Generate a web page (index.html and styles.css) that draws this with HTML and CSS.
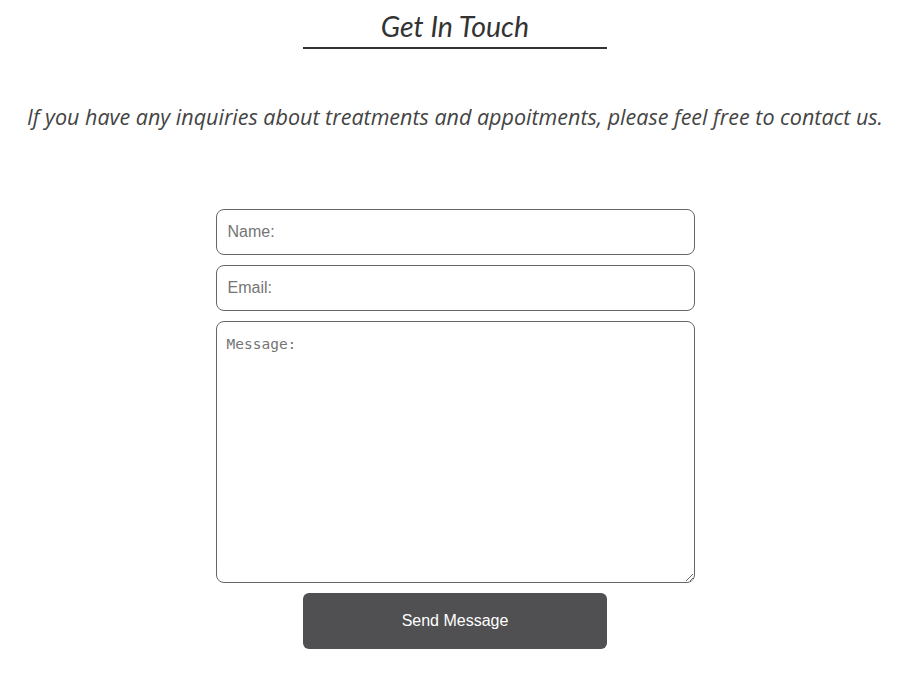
FILE: index.html
```html
<!DOCTYPE html>
<html lang="en">
<head>
<meta charset="utf-8">
<title>Get In Touch</title>
<link rel="stylesheet" href="styles.css">
</head>
<body>
<section class="contact">
  <h1 class="title">Get In Touch</h1>
  <p class="intro">If you have any inquiries about treatments and appoitments, please feel free to contact us.</p>
  <form class="form">
    <input class="field" type="text" placeholder="Name:">
    <input class="field" type="email" placeholder="Email:">
    <textarea class="field message" placeholder="Message:"></textarea>
    <button class="send" type="button">Send Message</button>
  </form>
</section>
</body>
</html>
```
FILE: styles.css
```css
html, body {
  margin: 0;
  padding: 0;
  background: #fff;
}
.contact {
  width: 910px;
  display: flex;
  flex-direction: column;
  align-items: center;
  padding-top: 6px;
}
.title {
  margin: 0;
  width: 304px;
  text-align: center;
  font-family: Lato, sans-serif;
  font-style: italic;
  font-weight: 400;
  font-size: 28.5px;
  line-height: 41px;
  color: #333;
  border-bottom: 2px solid #333;
}
.intro {
  margin: 53px 0 0;
  font-family: "Open Sans", sans-serif;
  font-style: italic;
  font-size: 21.5px;
  line-height: 30px;
  color: #444;
  text-align: center;
  white-space: nowrap;
}
.form {
  margin-top: 77px;
  display: flex;
  flex-direction: column;
  align-items: center;
  gap: 10px;
}
.field {
  box-sizing: border-box;
  width: 479px;
  height: 46px;
  margin: 0;
  padding: 0 11px;
  border: 1px solid #666;
  border-radius: 8px;
  font-family: "Liberation Sans", Arial, sans-serif;
  font-size: 16px;
  color: #333;
  background: #fff;
}
.field::placeholder {
  color: #757575;
}
.message {
  height: 262px;
  padding: 13px 10px;
  font-family: "DejaVu Sans Mono", monospace;
  font-size: 14.5px;
  line-height: 18px;
  resize: vertical;
}
.send {
  width: 304px;
  height: 56px;
  border: none;
  border-radius: 6px;
  background: #505052;
  color: #fff;
  font-family: "Liberation Sans", Arial, sans-serif;
  font-size: 16px;
  cursor: pointer;
}
```
